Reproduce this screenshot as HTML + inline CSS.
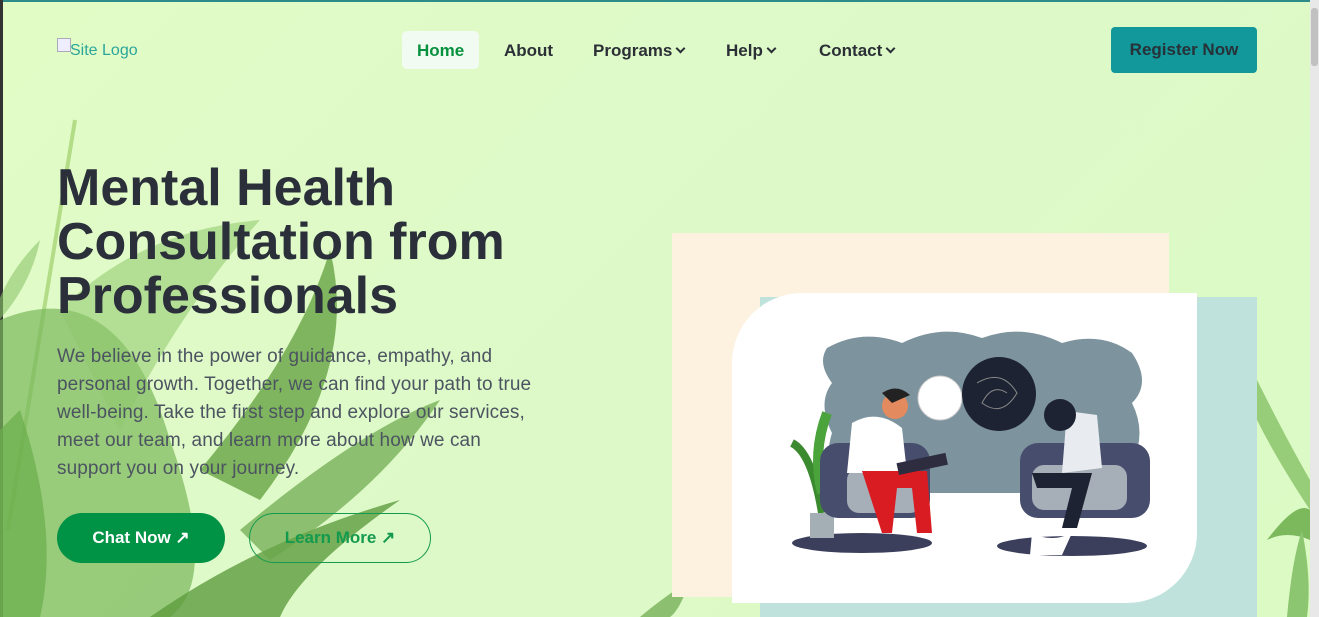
<!DOCTYPE html>
<html><head><meta charset="utf-8"><style>
*{margin:0;padding:0;box-sizing:border-box}
body{width:1319px;height:617px;overflow:hidden;background:linear-gradient(135deg,#e2fcc6 0%,#ddf9c8 50%,#dcfac4 100%);font-family:"Liberation Sans",sans-serif;position:relative}
.abs{position:absolute}
.nav a{position:absolute;top:41px;font-size:17px;font-weight:bold;color:#2b2f36;text-decoration:none}
.chev{display:inline-block;width:7px;height:7px;border-right:2px solid #2b2f36;border-bottom:2px solid #2b2f36;transform:rotate(45deg);margin-left:5px;position:relative;top:-4px}
h1{position:absolute;left:57px;top:161px;font-size:52px;line-height:54px;color:#2a2f3a;font-weight:bold}
p.lead{position:absolute;left:57px;top:343px;font-size:19px;line-height:28px;color:#4c5461;letter-spacing:0.1px}
</style></head><body>
<div class="abs" style="left:0;top:0;width:1319px;height:2px;background:#2d8c8a"></div>
<div class="abs" style="left:0;top:0;width:3px;height:617px;background:#333"></div>
<div class="abs" style="left:1310px;top:0;width:9px;height:617px;background:#e8e8e8"></div>
<div class="abs" style="left:1311px;top:8px;width:7px;height:58px;background:#c1c1c1;border-radius:3px"></div>

<svg class="abs" style="left:0;top:110px" width="700" height="507">
<path d="M75 10 L8 420" stroke="#9fcf6c" stroke-width="4" fill="none" opacity=".7"/>
<path d="M40 130 Q0 170 -10 220 Q30 180 40 130Z" fill="#8cc66a" opacity=".6"/>
<path d="M0 210 Q120 160 170 330 Q220 470 170 507 L0 507Z" fill="#79b65a" opacity=".7"/>
<path d="M60 200 Q140 120 260 110 Q180 200 120 320Z" fill="#8ec86b" opacity=".55"/>
<path d="M200 360 Q300 240 330 140 Q360 260 260 390Z" fill="#5f9d3b" opacity=".75"/>
<path d="M150 507 Q260 430 400 390 Q300 460 280 507Z" fill="#5e9c3e" opacity=".8"/>
<path d="M240 420 Q360 320 440 290 Q380 380 270 450Z" fill="#6aa64a" opacity=".7"/>
<path d="M20 300 Q60 420 40 507 L0 507 L0 320Z" fill="#6aad4c" opacity=".7"/>
<path d="M640 507 Q660 490 690 470 Q680 500 670 507Z" fill="#6aa64a" opacity=".7"/>
</svg>
<svg class="abs" style="left:1257px;top:380px" width="53" height="237">
<path d="M0 0 Q30 60 53 100 L53 130 Q20 80 0 40Z" fill="#86c165" opacity=".8"/>
<path d="M10 160 Q40 120 53 130 L53 160 Q30 150 10 160Z" fill="#7cb95c"/>
<path d="M30 237 Q35 180 45 150 Q55 200 50 237Z" fill="#8cc671"/>
</svg>

<div class="abs" style="left:57px;top:38px;width:14px;height:14px;border:1px solid #aab;background:#eef"></div>
<div class="abs" style="left:70px;top:42px;font-size:16px;color:#2aa59b">Site Logo</div>

<div class="nav">
<div class="abs" style="left:402px;top:31px;width:77px;height:38px;background:#f2fbf2;border-radius:5px"></div>
<a style="left:417px;color:#07913f">Home</a>
<a style="left:504px">About</a>
<a style="left:593px">Programs<span class="chev"></span></a>
<a style="left:726px">Help<span class="chev"></span></a>
<a style="left:819px">Contact<span class="chev"></span></a>
</div>
<div class="abs" style="left:1111px;top:27px;width:146px;height:46px;background:#12979a;border-radius:4px;color:#263238;font-weight:bold;font-size:17px;line-height:46px;text-align:center">Register Now</div>

<h1>Mental Health<br>Consultation from<br>Professionals</h1>
<p class="lead">We believe in the power of guidance, empathy, and<br>personal growth. Together, we can find your path to true<br>well-being. Take the first step and explore our services,<br>meet our team, and learn more about how we can<br>support you on your journey.</p>

<div class="abs" style="left:57px;top:513px;width:168px;height:50px;background:#009245;border-radius:25px;color:#fff;font-weight:bold;font-size:17px;line-height:50px;text-align:center">Chat Now ↗</div>
<div class="abs" style="left:249px;top:513px;width:182px;height:50px;border:1.5px solid #149a4e;border-radius:25px;color:#149a4e;font-weight:bold;font-size:17px;line-height:47px;text-align:center">Learn More ↗</div>

<div class="abs" style="left:672px;top:233px;width:497px;height:364px;background:#fdf2e0"></div>
<div class="abs" style="left:760px;top:297px;width:497px;height:320px;background:#bfe3dc"></div>
<div class="abs" style="left:732px;top:293px;width:465px;height:310px;background:#fff;border-radius:70px 0 70px 0"></div>

<svg class="abs" style="left:732px;top:293px" width="465" height="310">
<path d="M95 55 Q130 35 170 50 Q210 30 250 45 Q290 30 330 50 Q370 38 400 60 Q420 90 400 110 Q415 140 400 170 Q410 190 390 200 L110 200 Q90 170 100 140 Q85 110 100 90 Q85 70 95 55Z" fill="#7d939e"/>
<ellipse cx="130" cy="250" rx="70" ry="10" fill="#3b3f5c"/>
<ellipse cx="340" cy="253" rx="75" ry="10" fill="#3b3f5c"/>
<path d="M60 150 Q80 160 90 220" stroke="#3c8a2f" stroke-width="8" fill="none"/>
<path d="M95 120 Q80 160 90 200" stroke="#4aa33b" stroke-width="10" fill="none"/>
<rect x="78" y="220" width="24" height="25" fill="#a4aeb5"/>
<rect x="88" y="150" width="110" height="75" rx="18" fill="#474d6d"/>
<rect x="115" y="175" width="75" height="45" rx="12" fill="#a6aeb8"/>
<path d="M120 130 Q145 115 170 135 L175 180 L115 180Z" fill="#fff"/>
<circle cx="163" cy="113" r="13" fill="#e38a5e"/>
<path d="M150 100 Q165 90 178 102 L160 110Z" fill="#222"/>
<path d="M130 178 L195 178 L200 240 L185 240 L180 195 L165 195 L160 240 L150 240Z" fill="#d91c22"/>
<rect x="165" y="165" width="50" height="12" fill="#2d2d3f" transform="rotate(-12 190 170)"/>
<circle cx="208" cy="105" r="22" fill="#fff" stroke="#ccc"/>
<circle cx="267" cy="101" r="37" fill="#1e2333"/>
<path d="M245 90 Q270 75 285 100 Q270 125 250 110 Q260 90 275 100" stroke="#888" fill="none"/>
<rect x="288" y="150" width="130" height="75" rx="18" fill="#474d6d"/>
<rect x="300" y="172" width="95" height="45" rx="12" fill="#a6aeb8"/>
<path d="M335 118 L365 122 L370 175 L330 180Z" fill="#e8ecf0"/>
<circle cx="328" cy="122" r="16" fill="#1e2333"/>
<path d="M300 180 L360 180 L345 235 L330 235 L340 195 L305 195Z" fill="#1e2333"/>
<path d="M300 240 Q320 250 340 240 L330 262 L298 262Z" fill="#fff"/>
</svg>
</body></html>
